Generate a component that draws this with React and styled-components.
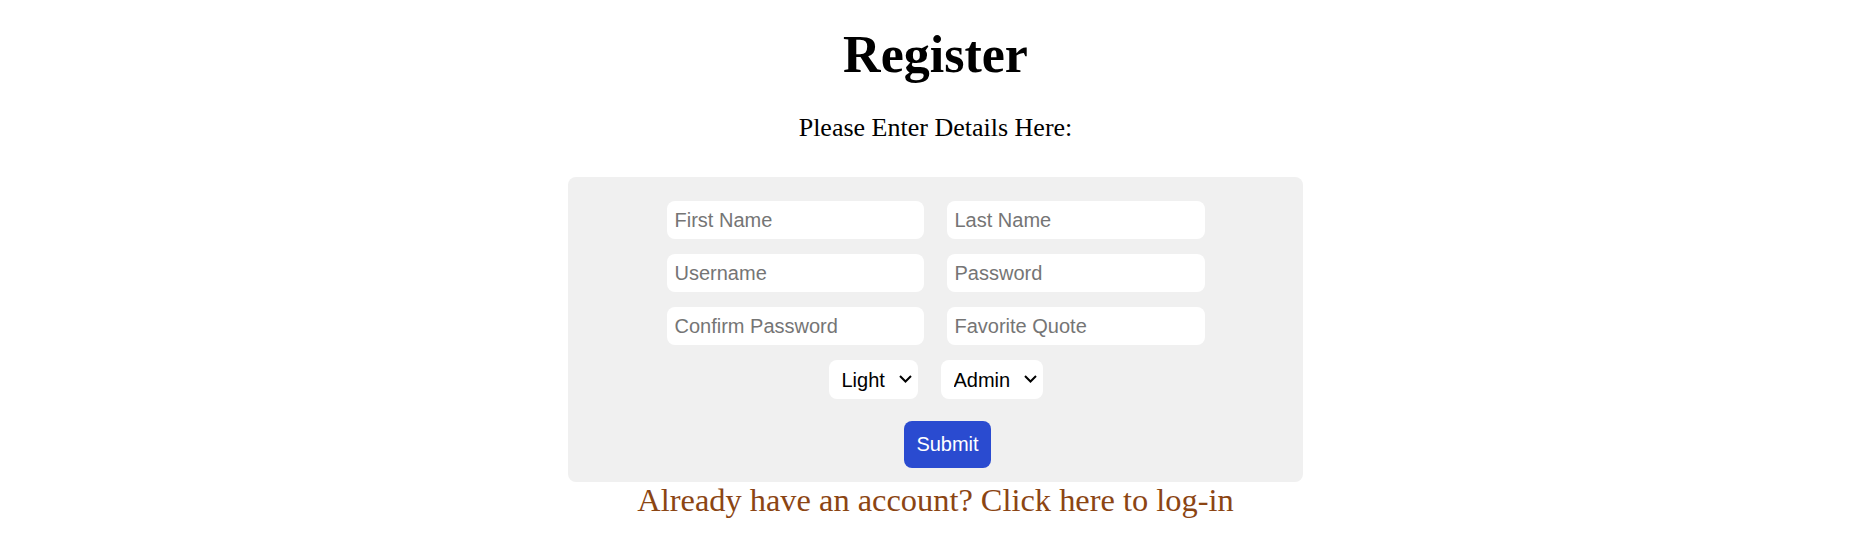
import styled, { createGlobalStyle } from "styled-components";
import { useState } from "react";

const GlobalStyle = createGlobalStyle`
  body {
    margin: 0;
    background: #ffffff;
    font-family: "Liberation Serif", "Times New Roman", serif;
  }
`;

const Page = styled.div`
  display: flex;
  flex-direction: column;
  align-items: center;
  padding: 25px 0 0 3px;
  text-align: center;
`;

const Title = styled.h1`
  margin: 0;
  font-size: 52px;
  line-height: 60px;
  font-weight: 700;
  color: #000;
`;

const Subtitle = styled.p`
  margin: 28px 0 0;
  font-size: 26px;
  line-height: 30px;
  color: #000;
`;

const Panel = styled.form`
  width: 735px;
  margin-top: 34px;
  padding: 24px 0 14px;
  box-sizing: border-box;
  background: #f0f0f0;
  border-radius: 8px;
  display: flex;
  flex-direction: column;
  align-items: center;
`;

const Fields = styled.div`
  display: grid;
  grid-template-columns: 257px 258px;
  gap: 15px 23px;
`;

const Input = styled.input`
  height: 38px;
  padding: 0 8px;
  box-sizing: border-box;
  border: none;
  border-radius: 8px;
  background: #fff;
  font-family: "Liberation Sans", Arial, sans-serif;
  font-size: 20px;
  color: #000;
  outline: none;

  &::placeholder {
    color: #757575;
  }
`;

const Choices = styled.div`
  display: flex;
  gap: 23px;
  margin-top: 15px;
`;

const SelectBox = styled.div`
  position: relative;
  display: flex;
`;

const Select = styled.select`
  appearance: none;
  width: ${(p) => p.$width}px;
  height: 39px;
  padding: 0 0 0 13px;
  box-sizing: border-box;
  border: none;
  border-radius: 8px;
  background: #fff;
  font-family: "Liberation Sans", Arial, sans-serif;
  font-size: 20px;
  color: #000;
  cursor: pointer;
`;

const Chevron = styled.svg`
  position: absolute;
  right: 6px;
  top: 15px;
  pointer-events: none;
`;

const Button = styled.button`
  margin: 22px 0 0 24px;
  padding: 12px;
  border: none;
  border-radius: 8px;
  background: #2a4bd0;
  color: #fff;
  font-family: "Liberation Sans", Arial, sans-serif;
  font-size: 20px;
  line-height: 23px;
  cursor: pointer;
`;

const LoginLink = styled.a`
  display: block;
  font-size: 32.4px;
  line-height: 36px;
  color: #8b4513;
  text-decoration: none;
  cursor: pointer;
`;

const Dropdown = ({ width, value, onChange, options }) => (
  <SelectBox>
    <Select $width={width} value={value} onChange={(e) => onChange(e.target.value)}>
      {options.map((o) => (
        <option key={o} value={o.toLowerCase()}>
          {o}
        </option>
      ))}
    </Select>
    <Chevron width="13" height="8" viewBox="0 0 13 8">
      <polyline points="1,1 6.5,6.5 12,1" fill="none" stroke="#000" strokeWidth="2" />
    </Chevron>
  </SelectBox>
);

const App = () => {
  const [theme, setTheme] = useState("light");
  const [role, setRole] = useState("admin");

  return (
    <>
      <GlobalStyle />
      <Page>
        <Title>Register</Title>
        <Subtitle>Please Enter Details Here:</Subtitle>
        <Panel onSubmit={(e) => e.preventDefault()}>
          <Fields>
            <Input placeholder="First Name" />
            <Input placeholder="Last Name" />
            <Input placeholder="Username" />
            <Input placeholder="Password" type="password" />
            <Input placeholder="Confirm Password" type="password" />
            <Input placeholder="Favorite Quote" />
          </Fields>
          <Choices>
            <Dropdown width={89} value={theme} onChange={setTheme} options={["Light", "Dark"]} />
            <Dropdown width={102} value={role} onChange={setRole} options={["Admin", "User"]} />
          </Choices>
          <Button type="submit">Submit</Button>
        </Panel>
        <LoginLink>Already have an account? Click here to log-in</LoginLink>
      </Page>
    </>
  );
};

export default App;
